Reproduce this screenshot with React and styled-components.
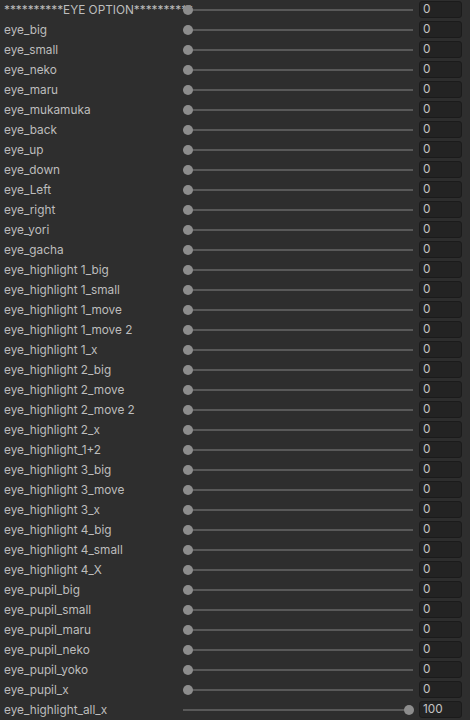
import React from "react";
import styled, { createGlobalStyle } from "styled-components";

const GlobalStyle = createGlobalStyle`
  html, body {
    margin: 0;
    padding: 0;
    background: #2e2e2e;
    overflow: hidden;
  }
`;

const Panel = styled.div`
  width: 470px;
  height: 720px;
  background: #2e2e2e;
  font-family: Inter, "Noto Sans", "Liberation Sans", sans-serif;
  font-size: 11.8px;
  color: #bdbdbd;
`;

const Row = styled.div`
  display: grid;
  grid-template-columns: 183px 230px 49px;
  align-items: center;
  height: 20px;
`;

const Label = styled.div`
  padding-left: 4px;
  white-space: nowrap;
  overflow: visible;
  line-height: 20px;
`;

const Track = styled.div`
  position: relative;
  height: 2px;
  background: #595959;
  z-index: 1;
`;

const Thumb = styled.div`
  position: absolute;
  top: 50%;
  width: 10px;
  height: 10px;
  margin-top: -5px;
  border-radius: 50%;
  background: #8d8d8d;
`;

const Field = styled.div`
  box-sizing: border-box;
  height: 17px;
  margin-top: -1px;
  margin-left: 6px;
  padding-left: 3px;
  background: #232323;
  border: 1px solid #1b1b1b;
  border-radius: 3px;
  line-height: 15px;
  color: #c4c4c4;
`;

const rows = [
  "**********EYE OPTION**********",
  "eye_big",
  "eye_small",
  "eye_neko",
  "eye_maru",
  "eye_mukamuka",
  "eye_back",
  "eye_up",
  "eye_down",
  "eye_Left",
  "eye_right",
  "eye_yori",
  "eye_gacha",
  "eye_highlight 1_big",
  "eye_highlight 1_small",
  "eye_highlight 1_move",
  "eye_highlight 1_move 2",
  "eye_highlight 1_x",
  "eye_highlight 2_big",
  "eye_highlight 2_move",
  "eye_highlight 2_move 2",
  "eye_highlight 2_x",
  "eye_highlight_1+2",
  "eye_highlight 3_big",
  "eye_highlight 3_move",
  "eye_highlight 3_x",
  "eye_highlight 4_big",
  "eye_highlight 4_small",
  "eye_highlight 4_X",
  "eye_pupil_big",
  "eye_pupil_small",
  "eye_pupil_maru",
  "eye_pupil_neko",
  "eye_pupil_yoko",
  "eye_pupil_x",
  "eye_highlight_all_x",
].map((name, i, all) => ({ name, value: i === all.length - 1 ? 100 : 0 }));

const Slider = ({ value }) => (
  <Track>
    <Thumb style={{ left: `${(value / 100) * 221}px` }} />
  </Track>
);

export default function App() {
  return (
    <Panel>
      <GlobalStyle />
      {rows.map((r) => (
        <Row key={r.name}>
          <Label>{r.name}</Label>
          <Slider value={r.value} />
          <Field>{r.value}</Field>
        </Row>
      ))}
    </Panel>
  );
}
